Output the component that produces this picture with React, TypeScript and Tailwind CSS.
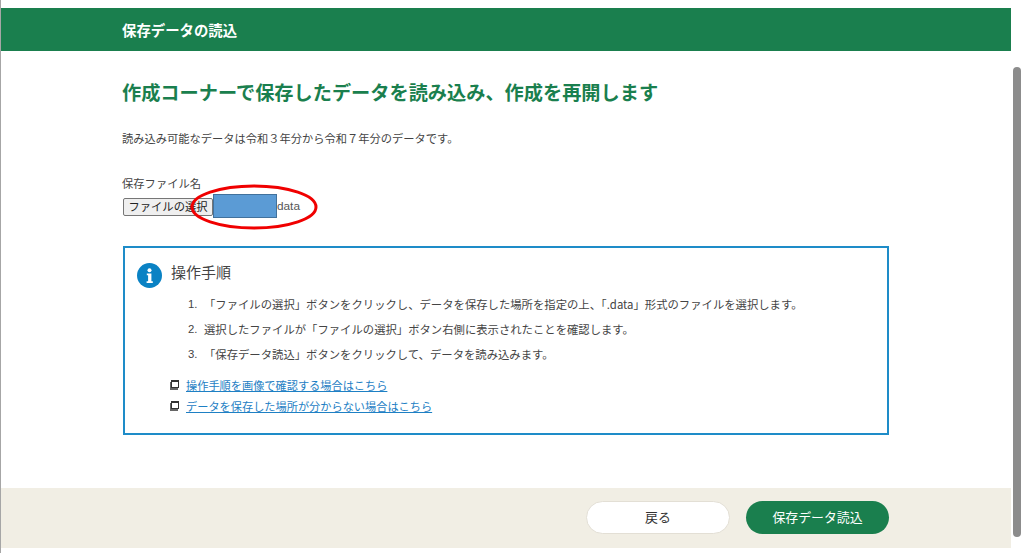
const font = { fontFamily: '"Noto Sans CJK JP", "Noto Sans", sans-serif' };

const steps = [
    '「ファイルの選択」ボタンをクリックし、データを保存した場所を指定の上、「.data」形式のファイルを選択します。',
    '選択したファイルが「ファイルの選択」ボタン右側に表示されたことを確認します。',
    '「保存データ読込」ボタンをクリックして、データを読み込みます。',
];

const links = ['操作手順を画像で確認する場合はこちら', 'データを保存した場所が分からない場合はこちら'];

function WindowIcon() {
    return (
        <span className="relative block w-[9px] h-[10px] shrink-0">
            <span className="absolute left-0 top-[2px] w-[8px] h-[8px] bg-[#666666]" />
            <span className="absolute left-[1px] top-0 w-[8px] h-[8px] border border-[#333333] border-t-2 bg-white" />
        </span>
    );
}

export default function App() {
    return (
        <div className="w-[1024px] h-[553px] overflow-hidden bg-white flex text-[#333333] border-l border-[#a6a6a6]" style={font}>
            {/* Page */}
            <div className="w-[1010px] pt-[8px] flex flex-col h-[548px] shrink-0">
                <header className="h-[43px] shrink-0 bg-[#1a7f4e] flex items-center pl-[121px] text-white font-bold text-[14.4px]">
                    保存データの読込
                </header>

                <main className="flex-1 pl-[121px] flex flex-col">
                    <h1 className="mt-[27px] h-[28px] leading-[28px] font-bold text-[19.2px] text-[#1a7f4e] whitespace-nowrap">
                        作成コーナーで保存したデータを読み込み、作成を再開します
                    </h1>
                    <p className="mt-[24px] h-[16px] leading-[16px] text-[11.25px] text-[#444444] whitespace-nowrap">
                        読み込み可能なデータは令和３年分から令和７年分のデータです。
                    </p>

                    <label className="mt-[29px] h-[16px] leading-[16px] text-[11.3px] text-[#444444]">保存ファイル名</label>

                    <div className="relative mt-[7px] h-[18px] flex items-center">
                        <button className="ml-[1px] w-[90px] h-[18px] bg-[#efefef] border border-[#767676] rounded-[2px] text-[11.3px] leading-none text-[#222222] whitespace-nowrap">
                            ファイルの選択
                        </button>
                        <span className="ml-[64px] text-[11.8px] text-[#555555]" style={{ fontFamily: '"Liberation Sans", sans-serif' }}>
                            data
                        </span>
                        {/* Masking rectangle and red marker drawn over the screenshot */}
                        <span className="absolute left-[91px] top-[-4px] w-[64px] h-[24px] bg-[#5b9bd5] border border-[#41719c]" />
                        <svg className="absolute left-[66px] top-[-15px]" width="132" height="50" viewBox="0 0 132 50">
                            <ellipse cx="66" cy="24" rx="62" ry="21" fill="none" stroke="#f00000" strokeWidth="3" />
                        </svg>
                    </div>

                    <section className="mt-[30px] ml-[1px] w-[766px] h-[189px] border-2 border-[#1e8cc8] flex flex-col pl-[12px] box-border">
                        <div className="mt-[15px] h-[24px] flex items-center">
                            <span className="w-[25px] h-[25px] rounded-full bg-[#0a82c4] flex items-center justify-center">
                                <svg width="25" height="25" viewBox="0 0 25 25">
                                    <circle cx="12.5" cy="7.2" r="2" fill="#ffffff" />
                                    <path d="M9.8 10.6h4.6v7.6h1.4v1.7H9.6v-1.7h1.5v-5.9H9.8z" fill="#ffffff" />
                                </svg>
                            </span>
                            <h2 className="ml-[9px] mb-[6px] text-[15px] leading-[24px] text-[#444444]">操作手順</h2>
                        </div>

                        <ol className="mt-[5px] ml-[51px] flex flex-col text-[11.35px] text-[#444444]">
                            {steps.map((step, i) => (
                                <li key={i} className="h-[25px] leading-[25px] flex whitespace-nowrap">
                                    <span className="w-[16px]" style={{ fontFamily: '"Liberation Sans", sans-serif' }}>{i + 1}.</span>
                                    <span>{step}</span>
                                </li>
                            ))}
                        </ol>

                        <ul className="mt-[10px] ml-[33px] flex flex-col gap-[5px] text-[11.2px]">
                            {links.map((link) => (
                                <li key={link} className="h-[16px] flex items-center gap-[7px]">
                                    <WindowIcon />
                                    <a href="#" className="leading-[16px] text-[#1e80c4] underline whitespace-nowrap">{link}</a>
                                </li>
                            ))}
                        </ul>
                    </section>
                </main>

                <footer className="h-[60px] shrink-0 bg-[#f1eee4] flex items-center justify-end gap-[16px] pr-[122px] pb-[2px]">
                    <button className="w-[144px] h-[33px] rounded-full bg-white border border-[#e3dfd5] text-[12.9px] text-[#333333]">
                        戻る
                    </button>
                    <button className="w-[143px] h-[33px] rounded-full bg-[#1a7f4e] text-[12.9px] text-white">
                        保存データ読込
                    </button>
                </footer>
            </div>

            {/* Scrollbar */}
            <div className="ml-[2px] w-[8px] pt-[67px]">
                <div className="h-[470px] rounded-full bg-[#8c8c8c]" />
            </div>
        </div>
    );
}
